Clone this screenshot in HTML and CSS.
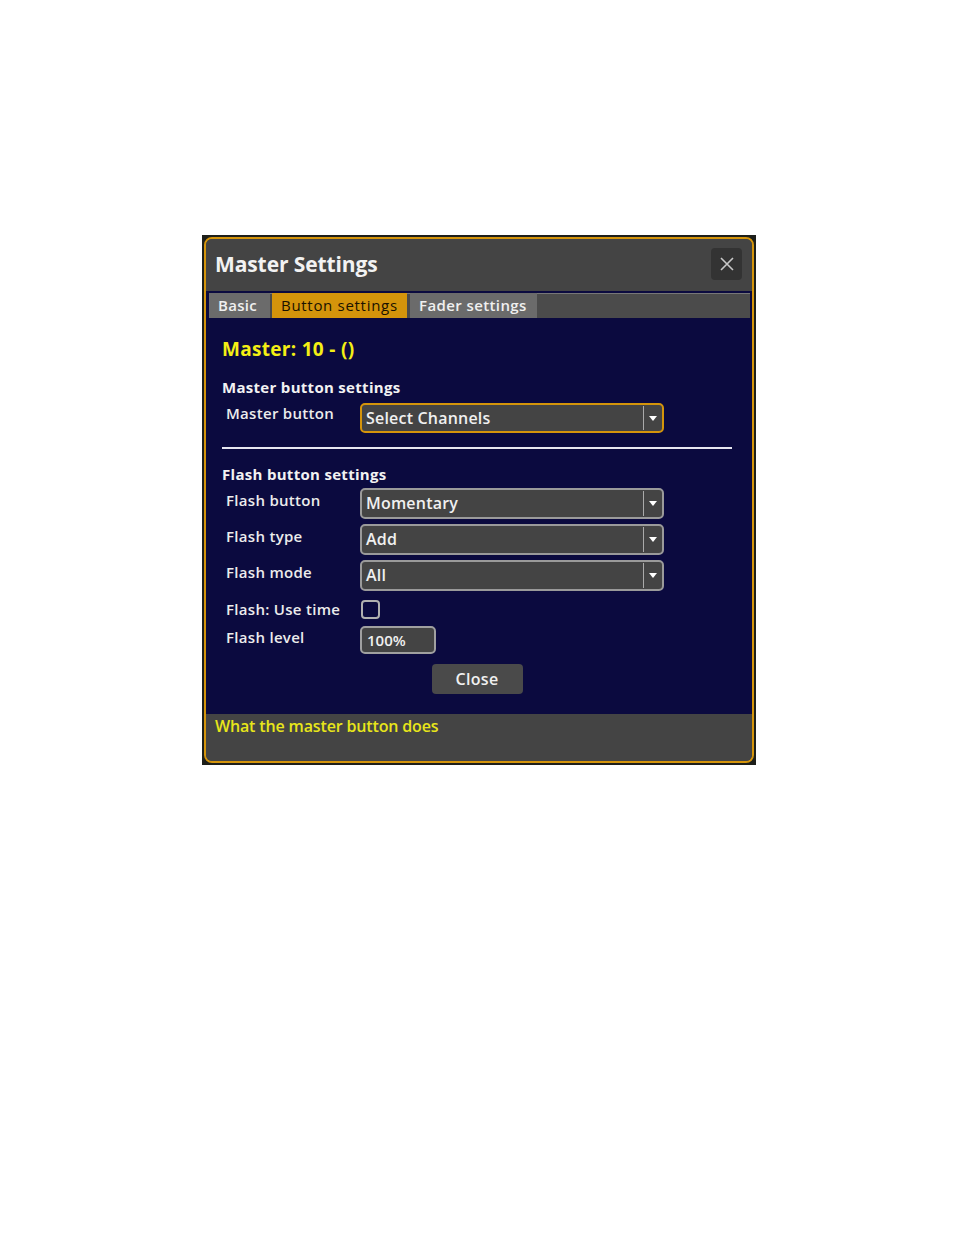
FILE: index.html
```html
<!DOCTYPE html>
<html>
<head>
<meta charset="utf-8">
<link rel="stylesheet" href="styles.css">
</head>
<body>
<div class="page">
  <div class="frame">
    <div class="dialog">
      <div class="titlebar">
        <div class="title">Master Settings</div>
        <div class="close-x">
          <svg width="14" height="14" viewBox="0 0 14 14"><path d="M1 1 L13 13 M13 1 L1 13" stroke="#c8c8c8" stroke-width="1.6" fill="none"/></svg>
        </div>
      </div>
      <div class="tabwrap">
        <div class="tabbar">
          <div class="tab">Basic</div>
          <div class="tab active">Button settings</div>
          <div class="tab">Fader settings</div>
        </div>
      </div>
      <div class="body">
        <div class="heading">Master: 10 - ()</div>
        <div class="section">Master button settings</div>
        <div class="row first">
          <div class="label">Master button</div>
          <div class="select focused"><span class="val">Select Channels</span><span class="drop"><span class="tri"></span></span></div>
        </div>
        <div class="rule"></div>
        <div class="section s2">Flash button settings</div>
        <div class="row r1">
          <div class="label">Flash button</div>
          <div class="select"><span class="val">Momentary</span><span class="drop"><span class="tri"></span></span></div>
        </div>
        <div class="row">
          <div class="label">Flash type</div>
          <div class="select"><span class="val">Add</span><span class="drop"><span class="tri"></span></span></div>
        </div>
        <div class="row">
          <div class="label">Flash mode</div>
          <div class="select"><span class="val">All</span><span class="drop"><span class="tri"></span></span></div>
        </div>
        <div class="row check-row">
          <div class="label">Flash: Use time</div>
          <div class="checkbox"></div>
        </div>
        <div class="row level-row">
          <div class="label">Flash level</div>
          <div class="textbox">100%</div>
        </div>
        <div class="btn-row"><div class="btn">Close</div></div>
      </div>
      <div class="footer">What the master button does</div>
    </div>
  </div>
</div>
</body>
</html>
```
FILE: styles.css
```css
html, body {
  margin: 0;
  padding: 0;
  background: #ffffff;
}
.page {
  padding: 235px 0 0 202px;
}
.frame {
  width: 550px;
  height: 526px;
  padding: 2px;
  background: #1d1f1a;
}
.dialog {
  height: 100%;
  box-sizing: border-box;
  border: 2px solid #d4940b;
  border-radius: 8px;
  background: #444444;
  overflow: hidden;
  display: flex;
  flex-direction: column;
  font-family: "Open Sans", "Noto Sans", sans-serif;
  color: #ececec;
}
.titlebar {
  height: 52px;
  flex: none;
  display: flex;
  align-items: center;
  justify-content: space-between;
  padding: 0 10px 0 9px;
  background: #444444;
}
.title {
  font-size: 21px;
  font-weight: 700;
  color: #f2f2f2;
  letter-spacing: -0.1px;
  margin-top: -3px;
}
.close-x {
  width: 31px;
  height: 32px;
  border-radius: 4px;
  background: #333333;
  display: flex;
  align-items: center;
  justify-content: center;
  margin-top: -2px;
}
.tabwrap {
  flex: none;
  background: #0b0a3f;
  padding: 2px 2px 0 3px;
}
.tabbar {
  display: flex;
  gap: 2px;
  height: 24px;
  background: #4b4b4b;
  border-top: 1px solid #777777;
}
.tab {
  background: #6b6b6b;
  color: #f0f0f0;
  font-size: 15px;
  font-weight: 600;
  line-height: 24px;
  padding: 0 9px;
  letter-spacing: 0.3px;
  margin-top: -1px;
  height: 25px;
}
.tab:nth-child(1) { width: 43px; }
.tab:nth-child(2) { width: 117px; }
.tab:nth-child(3) { width: 109px; margin-left: 1px; letter-spacing: 0.4px; }
.tab.active {
  background: #d4940b;
  color: #1a1200;
  font-weight: 400;
  letter-spacing: 0.7px;
}
.body {
  flex: 1;
  background: #0b0a3f;
  padding: 0 14px 0 16px;
}
.heading {
  margin-top: 19px;
  font-size: 19px;
  line-height: 24px;
  font-weight: 700;
  color: #f4ef14;
  letter-spacing: 0.3px;
}
.section {
  margin-top: 16px;
  font-size: 15px;
  line-height: 20px;
  font-weight: 700;
  color: #f2f2f2;
  letter-spacing: 0.3px;
}
.section.s2 {
  margin-top: 15px;
}
.row {
  display: flex;
  align-items: flex-start;
  margin-top: 5px;
}
.row.first {
  margin-top: 6px;
}
.row.r1 {
  margin-top: 4px;
}
.label {
  width: 134px;
  padding-left: 4px;
  font-size: 15px;
  font-weight: 600;
  line-height: 20px;
  color: #ececec;
  letter-spacing: 0.3px;
  margin-top: 2px;
}
.row.first .label {
  margin-top: 0;
}
.check-row .label {
  margin-top: -1px;
}
.select {
  width: 304px;
  height: 31px;
  box-sizing: border-box;
  border: 2px solid #9a9a9a;
  border-radius: 5px;
  background: #444444;
  display: flex;
  align-items: stretch;
}
.select.focused {
  border-color: #d4940b;
  height: 30px;
}
.val {
  flex: 1;
  padding-left: 4px;
  padding-top: 2px;
  font-size: 16px;
  font-weight: 600;
  line-height: 22px;
  color: #f0f0f0;
  letter-spacing: 0.2px;
}
.drop {
  width: 17px;
  margin: 1px 1px 1px 0;
  border-left: 1px solid #aaaaaa;
  display: flex;
  align-items: center;
  justify-content: center;
}
.tri {
  width: 0;
  height: 0;
  border-left: 4px solid transparent;
  border-right: 4px solid transparent;
  border-top: 5px solid #ffffff;
}
.rule {
  margin-top: 14px;
  width: 510px;
  height: 2px;
  background: #e6e6f0;
}
.check-row {
  margin-top: 9px;
}
.checkbox {
  width: 19px;
  height: 19px;
  box-sizing: border-box;
  border: 2px solid #b0b0b0;
  border-radius: 4px;
  margin-left: 1px;
}
.level-row {
  margin-top: 7px;
}
.level-row .label {
  margin-top: 1px;
}
.textbox {
  width: 76px;
  height: 28px;
  box-sizing: border-box;
  border: 2px solid #a0a0a0;
  border-radius: 5px;
  background: #444444;
  font-size: 15px;
  font-weight: 600;
  line-height: 24px;
  padding: 0 0 0 5px;
  color: #f0f0f0;
}
.btn-row {
  width: 510px;
  display: flex;
  justify-content: center;
  margin-top: 10px;
}
.btn {
  width: 91px;
  height: 30px;
  border-radius: 4px;
  background: #4a4a4a;
  color: #f0f0f0;
  font-size: 16px;
  font-weight: 600;
  line-height: 30px;
  text-align: center;
  letter-spacing: 0.3px;
}
.footer {
  flex: none;
  height: 47px;
  box-sizing: border-box;
  padding: 1px 0 0 9px;
  background: #444444;
  color: #e8e61a;
  font-size: 16px;
  font-weight: 600;
  line-height: 22px;
  letter-spacing: -0.15px;
}
```
